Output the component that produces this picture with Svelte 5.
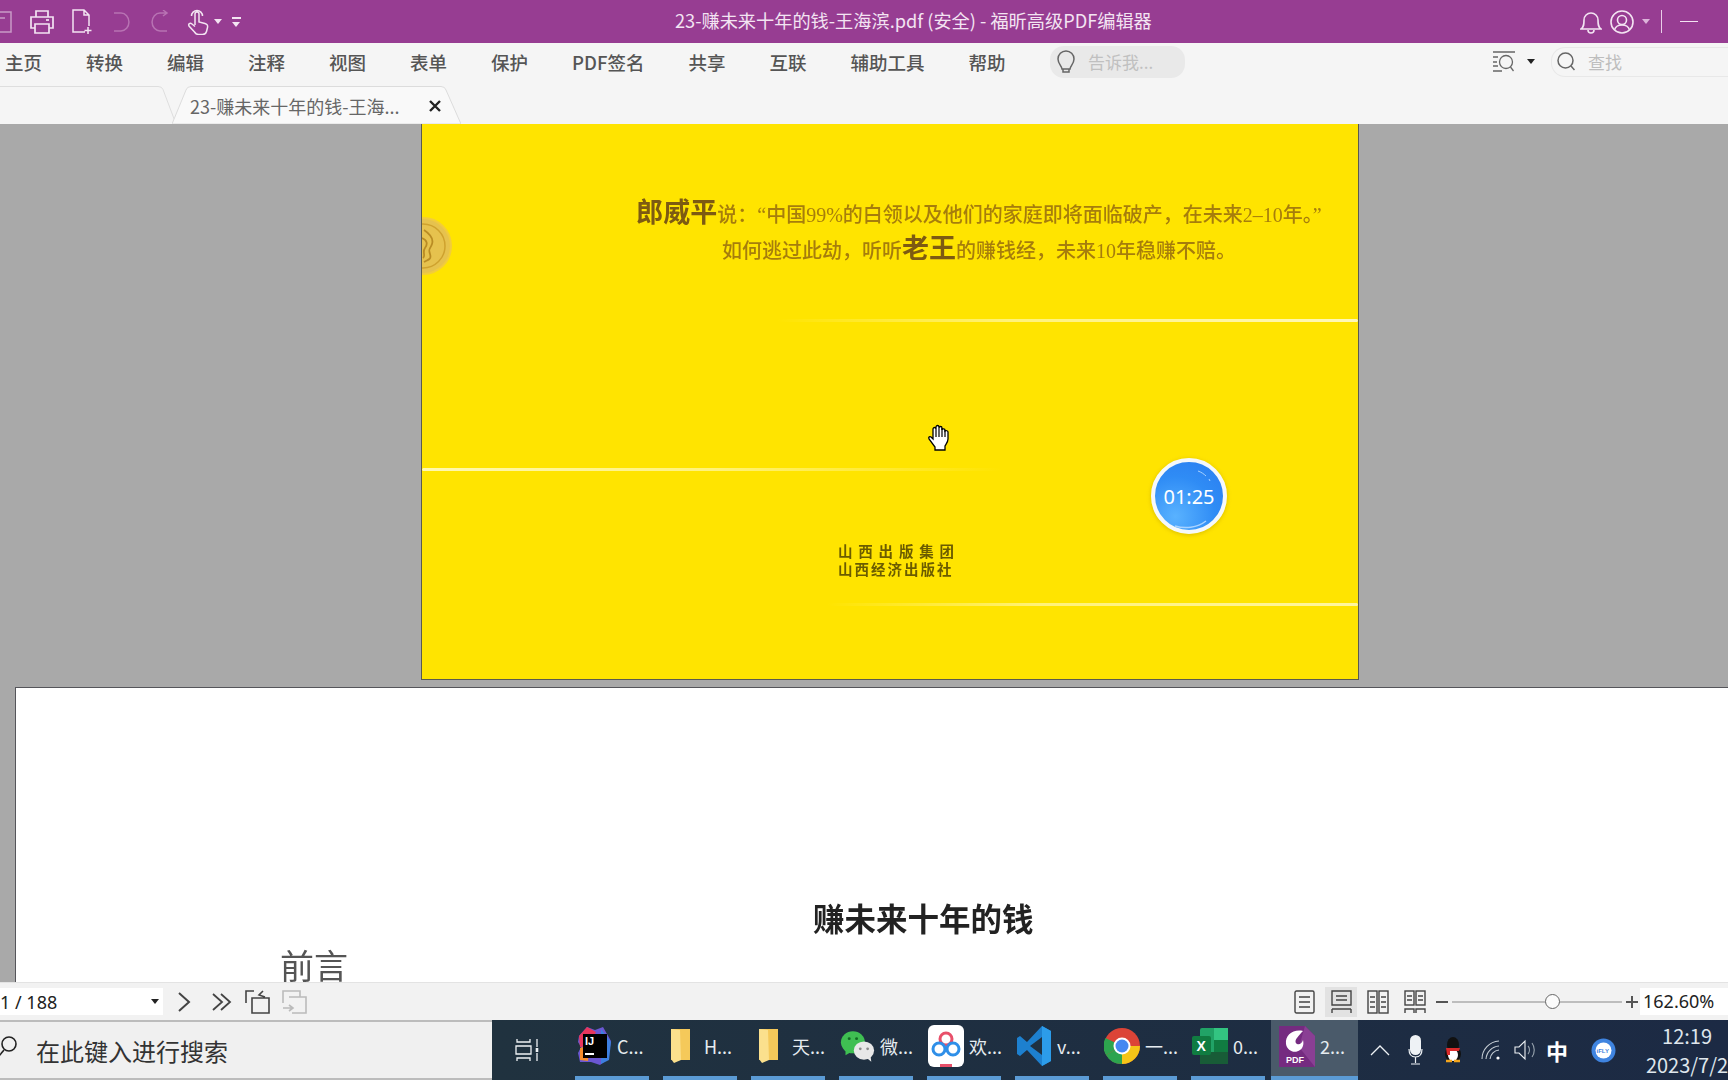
<script>
  const menus = ["主页", "转换", "编辑", "注释", "视图", "表单", "保护", "PDF签名", "共享", "互联", "辅助工具", "帮助"];
  const tasks = [
    { key: "idea", label: "C..." },
    { key: "folder", label: "H..." },
    { key: "folder", label: "天..." },
    { key: "wechat", label: "微..." },
    { key: "baidu", label: "欢..." },
    { key: "vscode", label: "v..." },
    { key: "chrome", label: "一..." },
    { key: "excel", label: "0..." },
    { key: "foxit", label: "2...", active: true }
  ];
</script>

<div class="app">
  <header class="titlebar">
    <div class="quick">
      <svg class="save" width="22" height="24" viewBox="0 0 22 24"><path d="M1 2h19v20H1zM6 8h8" fill="none" stroke="#c99ac6" stroke-width="1.5"/></svg>
      <svg width="26" height="26" viewBox="0 0 26 26" fill="none" stroke="#f3e4f2" stroke-width="1.7"><path d="M7 8V2h12v6M6 19H2V8h22v11h-4M6 15h14v9H6z"/><path d="M17 11h3"/></svg>
      <svg width="22" height="26" viewBox="0 0 22 26" fill="none" stroke="#f3e4f2" stroke-width="1.5"><path d="M14 23H2V1h11l5 5v11M13 1v5h5M17 18v7M13.500 21.500h7"/></svg>
      <svg width="18" height="24" viewBox="0 0 18 24" fill="none" stroke="#b873b3" stroke-width="1.5"><path d="M2 3h7a7.500 8.500 0 0 1 0 18H2"/></svg>
      <svg width="18" height="24" viewBox="0 0 18 24" fill="none" stroke="#b873b3" stroke-width="1.5"><path d="M16 21H9A7.500 8.500 0 0 1 9 3h7M12 0l4 3-4 3"/></svg>
      <svg width="22" height="26" viewBox="0 0 22 26" fill="none" stroke="#f3e4f2" stroke-width="1.5"><path d="M8 16V5a2 2 0 0 1 4 0v8l6 1.500c2 .5 3 2 2.500 4l-1 4c-.5 2-2 3-4 3h-4c-2 0-3-1-4-2.500L2 17c-1-2 1-3.500 3-2l3 2.500M4.500 7a5.500 5.500 0 0 1 11 0"/></svg>
      <span class="caret light"></span>
      <span class="more"></span>
    </div>
    <div class="doc-title">23-赚未来十年的钱-王海滨.pdf (安全) - 福昕高级PDF编辑器</div>
    <div class="win">
      <svg width="22" height="25" viewBox="0 0 22 25" fill="none" stroke="#f3e4f2" stroke-width="1.6"><path d="M1 20c3-2 3-5 3-9a7 7 0 0 1 14 0c0 4 0 7 3 9zM8 21a3 3 0 0 0 6 0"/></svg>
      <svg width="24" height="24" viewBox="0 0 24 24" fill="none" stroke="#f3e4f2" stroke-width="1.6"><circle cx="12" cy="12" r="11"/><circle cx="12" cy="10" r="4.500"/><path d="M4.500 20c1-4 4-5 7.500-5s6.500 1 7.500 5"/></svg>
      <span class="caret pink"></span>
      <span class="divider"></span>
      <span class="minimize"></span>
    </div>
  </header>

  <nav class="menubar">
    <div class="menus">
      {#each menus as menu}
        <span class="menu">{menu}</span>
      {/each}
    </div>
    <div class="tell">
      <svg width="20" height="24" viewBox="0 0 20 24" fill="none" stroke="#666" stroke-width="1.500"><path d="M6 19c0-3-4-5-4-10a8 8 0 0 1 16 0c0 5-4 7-4 10zM7 19v3h6v-3"/></svg>
      <span>告诉我...</span>
    </div>
    <svg class="lookup" width="24" height="22" viewBox="0 0 24 22" fill="none" stroke="#666" stroke-width="1.300"><path d="M1 1h22M1 6h5M1 11h4M1 15h5M1 20h9"/><circle cx="14" cy="11" r="6.500"/><path d="M18.500 16l3 4"/></svg>
    <span class="caret dark"></span>
    <div class="find">
      <svg width="18" height="19" viewBox="0 0 18 19" fill="none" stroke="#666" stroke-width="1.500"><circle cx="8.500" cy="8.500" r="7.500"/><path d="M14 14l3.500 4"/></svg>
      <span>查找</span>
    </div>
  </nav>

  <div class="tabbar">
    <svg class="tab-back" width="176" height="38" viewBox="0 0 176 38"><path d="M0 .5h158q4 0 5 3L176 38" fill="none" stroke="#dedede"/></svg>
    <div class="tab">
      <svg class="tab-shape" width="289" height="38" viewBox="0 0 289 38"><path d="M0 38L14 4q1-3.500 5-3.500h250q4 0 5 3.500l15 34z" fill="#f9f9f9" stroke="#dcdcdc"/></svg>
      <span class="tab-name">23-赚未来十年的钱-王海...</span>
      <svg class="tab-close" width="14" height="14" viewBox="0 0 14 14"><path d="M2 2l10 10M12 2L2 12" stroke="#222" stroke-width="2.400"/></svg>
    </div>
  </div>

  <main class="viewer">
    <section class="page-cover">
      <svg class="coin" width="30" height="60" viewBox="0 0 30 60"><circle cx="1" cy="30" r="28" fill="#e6c24e" stroke="#f2cc3c" stroke-width="2"/><circle cx="1" cy="30" r="22" fill="none" stroke="#cfa22e" stroke-width="1.500"/><path d="M2 14c6 4 10 8 8 14s-4 4-2 10-3 6-6 8M0 22c5 2 6 6 3 10s1 8-2 10" fill="none" stroke="#b98c24" stroke-width="1.800"/></svg>
      <div class="blurb">
        <p><b>郎威平</b>说：“中国99%的白领以及他们的家庭即将面临破产，在未来2–10年。”</p>
        <p>如何逃过此劫，听听<b>老王</b>的赚钱经，未来10年稳赚不赔。</p>
      </div>
      <div class="streak s1"></div>
      <div class="streak s2"></div>
      <div class="streak s3"></div>
      <div class="press">
        <div class="press-a">山西出版集团</div>
        <div>山西经济出版社</div>
      </div>
      <div class="timer">
        <svg class="shine" width="68" height="68" viewBox="0 0 68 68" fill="none" stroke="#a9d3ff" stroke-width="1"><path d="M43 9c3 1 6 3 8 5M54 17l1 2"/><path d="M20 64c10 3 22 2 31-5" stroke-width="1.500"/></svg>
        <span>01:25</span>
      </div>
      <svg class="hand" width="25" height="27" viewBox="0 0 25 27"><path d="M8 26v-3L2 15c-1-2 1-3 2-2l2 2V5c0-2 3-2 3 0V3c0-2 3-2 3 0v1c0-2 3-2 3 0v2c0-2 3-1 3 0v1c1-1 3 0 3 1v7c0 3-2 5-3 7v4z" fill="#fff" stroke="#000" stroke-width="1.300"/><path d="M9 5v8M12 4v9M15 4v9M18 6v7" stroke="#000" stroke-width="1.200"/></svg>
    </section>
    <section class="page-text">
      <h1>赚未来十年的钱</h1>
      <h2>前言</h2>
    </section>
  </main>

  <footer class="statusbar">
    <div class="page-no"><span>1 / 188</span><i class="caret dark"></i></div>
    <svg class="nav" width="14" height="22" viewBox="0 0 14 22" fill="none" stroke="#444" stroke-width="2"><path d="M2 2l10 9-10 9"/></svg>
    <svg class="nav2" width="20" height="20" viewBox="0 0 20 20" fill="none" stroke="#444" stroke-width="1.800"><path d="M1 2l9 8-9 8M9 2l9 8-9 8"/></svg>
    <svg class="nav3" width="25" height="24" viewBox="0 0 25 24" fill="none" stroke="#444" stroke-width="1.600"><path d="M9 1H1v12M7 8h17v15H7zM18 1l-4 4 6 2"/></svg>
    <svg class="nav4" width="25" height="24" viewBox="0 0 25 24" fill="none" stroke="#bbb" stroke-width="1.600"><path d="M1 13V1h17v6M7 7h17v16H10M1 18h10M7 15l4 3-4 3"/></svg>
    <div class="view-modes">
      <svg width="21" height="24" viewBox="0 0 21 24" fill="none" stroke="#444" stroke-width="1.400"><rect x="1" y="1" width="19" height="22" rx="1.500"/><path d="M5 7h11M5 12h11M5 17h11"/></svg>
      <div class="mode-on">
        <svg width="21" height="24" viewBox="0 0 21 24" fill="none" stroke="#444" stroke-width="1.400"><path d="M1 1h19v14H1zM5 6h11M5 10h11M1 19h19M1 23v-4M20 23v-4"/></svg>
      </div>
      <svg width="22" height="24" viewBox="0 0 22 24" fill="none" stroke="#444" stroke-width="1.400"><rect x="1" y="1" width="9" height="22"/><rect x="12" y="1" width="9" height="22"/><path d="M3 7h5M3 12h5M3 17h5M14 7h5M14 12h5M14 17h5"/></svg>
      <svg width="22" height="24" viewBox="0 0 22 24" fill="none" stroke="#444" stroke-width="1.400"><rect x="1" y="1" width="9" height="14"/><rect x="12" y="1" width="9" height="14"/><path d="M3 6h5M3 10h5M14 6h5M14 10h5M1 23v-4h9v4M12 23v-4h9v4"/></svg>
    </div>
    <div class="zoom">
      <span class="zoom-minus"></span>
      <div class="slider"><span class="thumb"></span></div>
      <span class="zoom-plus"></span>
      <div class="zoom-value">162.60%</div>
    </div>
  </footer>

  <div class="taskbar">
    <div class="search">
      <svg width="20" height="22" viewBox="0 0 20 22" fill="none" stroke="#222" stroke-width="1.600"><circle cx="9" cy="8" r="7"/><path d="M4 14l-5 6"/></svg>
      <span>在此键入进行搜索</span>
    </div>
    <div class="tray-area">
      <svg class="taskview" width="25" height="24" viewBox="0 0 25 24" fill="none" stroke="#eef2f5" stroke-width="1.300"><path d="M2 1v3h13V1M1 8h15v8H1zM2 23v-3h13v3M22 1v8M22 15v8"/><path d="M22 10v4" stroke-width="2.600"/></svg>
      <div class="tasks">
        {#each tasks as task}
          <div class="task" class:active={task.active}>
            {#if task.key === "idea"}
              <svg width="36" height="40" viewBox="0 0 36 40"><path d="M3 10l8-9 8 3 8-3 8 14-3 18-8 6-9-3-11 0-2-9 3-6-3-5z" fill="#6b57d2"/><path d="M3 10l8-9 9 5-7 14-9 1z" fill="#e8365d"/><path d="M4 22l9-3-1 16-8-1z" fill="#f48c2c"/><path d="M25 3l10 13-2 18-8 4z" fill="#3d7fe0"/><rect x="7" y="8" width="24" height="24" fill="#000"/><text x="9" y="19" class="ij">IJ</text><rect x="9" y="27" width="9" height="2" fill="#fff"/></svg>
            {:else if task.key === "folder"}
              <svg width="22" height="36" viewBox="0 0 22 36"><path d="M1 1h19v31H1z" fill="#f5c95a"/><path d="M1 1l9 1 1 30-7 3-3-4z" fill="#fbe08d"/></svg>
            {:else if task.key === "wechat"}
              <svg width="35" height="36" viewBox="0 0 38 36"><ellipse cx="14" cy="14" rx="13" ry="12" fill="#3fbf52"/><path d="M6 22l0 6 7-4z" fill="#3fbf52"/><circle cx="10" cy="10" r="1.600" fill="#136b24"/><circle cx="18" cy="10" r="1.600" fill="#136b24"/><ellipse cx="26" cy="23" rx="11" ry="10" fill="#e8e8e8"/><path d="M29 31l5 4-1-7z" fill="#e8e8e8"/><circle cx="22" cy="21" r="1.500" fill="#8a8a8a"/><circle cx="30" cy="21" r="1.500" fill="#8a8a8a"/></svg>
            {:else if task.key === "baidu"}
              <svg width="36" height="42" viewBox="0 0 36 42"><rect width="36" height="42" rx="6" fill="#fff"/><circle cx="18" cy="14" r="6" fill="none" stroke="#e8506a" stroke-width="3"/><circle cx="11" cy="24" r="6" fill="none" stroke="#2f8fe8" stroke-width="3"/><circle cx="25" cy="24" r="6" fill="none" stroke="#2f8fe8" stroke-width="3"/><rect x="12" y="39" width="12" height="3" fill="#e8506a"/></svg>
            {:else if task.key === "vscode"}
              <svg width="36" height="42" viewBox="0 0 36 42"><path d="M26 1l9 5v30l-9 5-15-16-7 6-3-2v-16l3-2 7 6z" fill="#1d80cf"/><path d="M26 12L14 21l12 9z" fill="#1f3142"/><path d="M26 1l9 5v30l-9 5z" fill="#2c9cea"/></svg>
            {:else if task.key === "chrome"}
              <svg width="36" height="42" viewBox="0 0 36 36"><circle cx="18" cy="18" r="18" fill="#dc4437"/><path d="M18 18L2 27a18 18 0 0 1-.5-17z" fill="#2da44e"/><path d="M18 18l-16 9a18 18 0 0 0 16 9z" fill="#2da44e"/><path d="M18 18h18a18 18 0 0 1-18 18z" fill="#f5c518"/><circle cx="18" cy="18" r="8.500" fill="#fff"/><circle cx="18" cy="18" r="6.500" fill="#4688f1"/></svg>
            {:else if task.key === "excel"}
              <svg width="36" height="38" viewBox="0 0 36 38"><rect x="8" y="1" width="28" height="36" rx="2" fill="#21a366"/><rect x="22" y="1" width="14" height="12" fill="#33c481"/><rect x="8" y="25" width="28" height="12" fill="#185c37"/><rect x="22" y="13" width="14" height="12" fill="#107c41"/><rect x="0" y="9" width="19" height="19" rx="2" fill="#107c41"/><text x="4.500" y="24" class="xl">X</text></svg>
            {:else if task.key === "foxit"}
              <svg width="36" height="42" viewBox="0 0 36 42"><path d="M0 1h26l10 10v31H0z" fill="#752b80"/><path d="M26 1l10 10v31L20 22z" fill="#8a3f94"/><path d="M24 6C14 4 6 10 7 19c1 7 9 10 14 6 3-2 4-6 3-10-1 3-3 5-6 4-2-1-2-4 0-6 2-3 4-5 6-7z" fill="#fff"/><text x="7" y="38" class="fx">PDF</text></svg>
            {/if}
            <span>{task.label}</span>
          </div>
        {/each}
      </div>
      <div class="tray">
        <svg width="20" height="12" viewBox="0 0 20 12" fill="none" stroke="#eef2f5" stroke-width="1.300"><path d="M1 11l9-9 9 9"/></svg>
        <svg width="15" height="30" viewBox="0 0 15 30"><rect x="2" y="0" width="11" height="20" rx="5.500" fill="#eef2f5"/><path d="M1 14c0 6 3 8 6.500 8s6.500-2 6.500-8M7.500 22v6M3 29h9" fill="none" stroke="#eef2f5" stroke-width="1.200"/></svg>
        <svg width="20" height="26" viewBox="0 0 20 26"><ellipse cx="10" cy="8" rx="6" ry="8" fill="#111"/><ellipse cx="10" cy="17" rx="8" ry="8" fill="#111"/><ellipse cx="10" cy="18" rx="5" ry="6" fill="#fff"/><path d="M3 11h14l-1 3-9 0v4l-3 0z" fill="#d92b2b"/><path d="M3 24h6M11 24h6" stroke="#f3a51c" stroke-width="2.500"/></svg>
        <svg width="20" height="22" viewBox="0 0 20 22" fill="none" stroke="#c7cfd6" stroke-width="1.100"><path d="M1 20A18 18 0 0 1 18 2M5 20A14 14 0 0 1 18 7M9 20a10 10 0 0 1 9-9"/><circle cx="17" cy="19" r="1.600" fill="#fff" stroke="none"/></svg>
        <svg width="22" height="22" viewBox="0 0 22 22" fill="none" stroke="#eef2f5" stroke-width="1.100"><path d="M1 8h4l6-6v18l-6-6H1z"/><path d="M14 7c2 2 2 6 0 8M18 4c3 4 3 10 0 14" stroke="#9aa6b0"/></svg>
        <span class="ime">中</span>
        <svg width="25" height="25" viewBox="0 0 25 25"><circle cx="12.500" cy="12.500" r="12" fill="#3f84e0"/><circle cx="12.500" cy="12.500" r="8" fill="#fff"/><text x="5.500" y="15" class="ifly">iFLY</text></svg>
      </div>
      <div class="clock">
        <div>12:19</div>
        <div>2023/7/2</div>
      </div>
    </div>
  </div>
</div>

<style>
  :global(body) {
    margin: 0;
    overflow: hidden;
  }

  .app {
    width: 1728px;
    height: 1080px;
    display: flex;
    flex-direction: column;
    overflow: hidden;
    font-family: "Noto Sans CJK SC", "Noto Sans", sans-serif;
    background: #f5f5f5;
  }

  svg {
    flex: none;
    display: block;
  }

  .caret {
    display: block;
    flex: none;
    width: 0;
    height: 0;
    border-left: 4.5px solid transparent;
    border-right: 4.5px solid transparent;
    border-top: 5px solid #222;
  }

  .caret.light {
    border-top-color: #f3e4f2;
  }

  .caret.pink {
    border-top-color: #dcb4da;
  }

  .titlebar {
    height: 43px;
    flex: none;
    display: flex;
    align-items: center;
    background: #973d92;
  }

  .quick {
    width: 250px;
    flex: none;
    display: flex;
    align-items: center;
  }

  .save {
    margin-left: -9px;
  }

  .quick svg:nth-child(2) {
    margin-left: 16px;
  }

  .quick svg:nth-child(3) {
    margin-left: 16px;
  }

  .quick svg:nth-child(4) {
    margin-left: 19px;
  }

  .quick svg:nth-child(5) {
    margin-left: 21px;
  }

  .quick svg:nth-child(6) {
    margin-left: 18px;
  }

  .quick .caret {
    margin-left: 5px;
  }

  .more {
    margin-left: 10px;
    width: 9px;
    height: 8px;
    border-top: 2px solid #f3e4f2;
    position: relative;
  }

  .more::after {
    content: "";
    position: absolute;
    top: 3px;
    left: 0;
    border-left: 4.5px solid transparent;
    border-right: 4.5px solid transparent;
    border-top: 5px solid #f3e4f2;
  }

  .doc-title {
    margin: 0 0 3px 425px;
    font-size: 18.200px;
    line-height: 22px;
    color: #f3e4f2;
    white-space: nowrap;
  }

  .win {
    margin-left: auto;
    display: flex;
    align-items: center;
    gap: 8px;
    padding-right: 30px;
  }

  .win .caret {
    margin-left: 0;
  }

  .divider {
    width: 1px;
    height: 23px;
    margin-left: 3px;
    background: #e9cfe8;
  }

  .minimize {
    width: 18px;
    height: 1px;
    margin-left: 10px;
    background: #f3e4f2;
  }

  .menubar {
    height: 43px;
    flex: none;
    box-sizing: border-box;
    padding-bottom: 6px;
    display: flex;
    align-items: center;
    background: #f5f5f5;
  }

  .menus {
    display: flex;
    gap: 44px;
    padding-left: 5px;
    width: 1050px;
    flex: none;
    box-sizing: border-box;
  }

  .menu {
    font-size: 18.500px;
    line-height: 26px;
    font-weight: 500;
    color: #555;
    white-space: nowrap;
  }

  .tell {
    width: 135px;
    height: 32px;
    flex: none;
    box-sizing: border-box;
    display: flex;
    align-items: center;
    gap: 12px;
    padding-left: 6px;
    border-radius: 14px;
    background: #e9e9e9;
    font-size: 17px;
    color: #c0c0c0;
    margin-right: 307px;
  }

  .lookup {
    margin-right: 11px;
  }

  .find {
    margin-left: 16px;
    flex: 1;
    height: 28px;
    display: flex;
    align-items: center;
    gap: 13px;
    padding-left: 5px;
    border: 1px solid #e8e8e8;
    border-right: 0;
    border-radius: 14px 0 0 14px;
    font-size: 17px;
    color: #bdbdbd;
  }

  .tabbar {
    height: 38px;
    flex: none;
    display: flex;
    background: #f5f5f5;
  }

  .tab-back {
    margin-right: -4px;
  }

  .tab {
    position: relative;
    width: 289px;
    flex: none;
    display: flex;
    align-items: center;
    padding: 2px 0 0 18px;
    box-sizing: border-box;
  }

  .tab-shape {
    position: absolute;
    left: 0;
    top: 0;
  }

  .tab-name {
    position: relative;
    width: 238px;
    font-size: 18px;
    color: #666;
    white-space: nowrap;
  }

  .tab-close {
    position: relative;
  }

  .viewer {
    height: 858px;
    flex: none;
    overflow: hidden;
    background: #a9a9a9;
  }

  .page-cover {
    position: relative;
    box-sizing: border-box;
    width: 938px;
    height: 556px;
    margin-left: 421px;
    overflow: hidden;
    padding: 73px 0 0 178px;
    background: #ffe400;
    border: 1px solid #5a5a50;
    border-top: 0;
  }

  .coin {
    position: absolute;
    left: 0;
    top: 92px;
    filter: blur(0.5px);
  }

  .blurb {
    font-family: "Liberation Serif", "Noto Sans CJK SC", serif;
    text-align: center;
    white-space: nowrap;
    color: #a67d0c;
    filter: blur(0.5px);
  }

  .blurb p {
    margin: 0;
    font-size: 20px;
    line-height: 36px;
    font-weight: 500;
  }

  .blurb b {
    font-family: "Noto Sans CJK SC", sans-serif;
    font-size: 27px;
    line-height: 1;
    font-weight: 700;
    color: #7d5a12;
  }

  .streak {
    position: absolute;
    height: 3px;
    border-radius: 2px;
    filter: blur(0.5px);
  }

  .s1 {
    right: 0;
    top: 195px;
    width: 580px;
    background: linear-gradient(90deg, #ffe400, #fff27a 40%, #fff8b8);
  }

  .s2 {
    left: 0;
    top: 344px;
    width: 580px;
    background: linear-gradient(90deg, #fff8b0, #fff27a 50%, #ffe400);
  }

  .s3 {
    right: 0;
    top: 479px;
    width: 530px;
    background: linear-gradient(90deg, #ffe400, #fff27a 40%, #fff6a0);
  }

  .press {
    position: absolute;
    left: 416px;
    top: 418px;
    width: 118px;
    font-size: 14.500px;
    line-height: 18px;
    font-weight: 700;
    color: #6b5c00;
    white-space: nowrap;
    letter-spacing: 2px;
    filter: blur(0.3px);
  }

  .press-a {
    letter-spacing: 5.800px;
  }

  .timer {
    position: absolute;
    left: 729px;
    top: 334px;
    width: 76px;
    height: 76px;
    box-sizing: border-box;
    display: flex;
    align-items: center;
    justify-content: center;
    border: 4px solid #f5f8fa;
    border-radius: 50%;
    background: radial-gradient(circle at 30% 80%, #59b2ff, #2f8cf5 55%, #2a7cf0);
    box-shadow: 0 1px 4px rgba(160, 130, 0, 0.4);
    font-family: "Noto Sans", sans-serif;
    font-size: 20px;
    color: #fff;
  }

  .timer span {
    position: relative;
  }

  .shine {
    position: absolute;
    left: 0;
    top: 0;
  }

  .hand {
    position: absolute;
    left: 505px;
    top: 300px;
  }

  .page-text {
    box-sizing: border-box;
    height: 400px;
    margin: 7px 0 0 15px;
    padding-top: 206px;
    background: #fff;
    border-top: 1px solid #55555a;
    border-left: 1px solid #55555a;
  }

  h1 {
    margin: 0;
    padding-left: 797px;
    font-size: 31.500px;
    line-height: 46px;
    font-weight: 700;
    color: #222;
    white-space: nowrap;
    filter: blur(0.6px);
  }

  h2 {
    margin: 3px 0 0;
    padding-left: 264px;
    font-size: 34px;
    line-height: 44px;
    font-weight: 400;
    color: #555;
    filter: blur(0.5px);
  }

  .statusbar {
    position: relative;
    height: 38px;
    flex: none;
    display: flex;
    align-items: center;
    box-sizing: border-box;
    border-top: 1px solid #e3e3e3;
    background: #f2f2f2;
  }

  .page-no {
    width: 163px;
    height: 27px;
    flex: none;
    box-sizing: border-box;
    display: flex;
    align-items: center;
    justify-content: space-between;
    padding-right: 4px;
    background: #fff;
    font-family: "Noto Sans", sans-serif;
    font-size: 18px;
    color: #222;
  }

  .nav {
    margin-left: 14px;
  }

  .nav2 {
    margin-left: 21px;
  }

  .nav3 {
    margin-left: 13px;
  }

  .nav4 {
    margin-left: 12px;
  }

  .view-modes {
    display: flex;
    align-items: center;
    margin-left: 987px;
  }

  .view-modes > svg:nth-child(3) {
    margin-left: 10px;
  }

  .view-modes > svg:nth-child(4) {
    margin-left: 15px;
  }

  .mode-on {
    width: 32px;
    height: 30px;
    margin-left: 10px;
    display: flex;
    align-items: center;
    justify-content: center;
    background: #e2e2e2;
  }

  .zoom {
    flex: 1;
    display: flex;
    align-items: center;
    margin-left: 10px;
  }

  .zoom-minus {
    width: 12px;
    height: 2px;
    background: #555;
  }

  .slider {
    position: relative;
    width: 170px;
    height: 2px;
    margin-left: 4px;
    background: #bdbdbd;
  }

  .thumb {
    position: absolute;
    left: 93px;
    top: -7px;
    width: 13px;
    height: 13px;
    border: 1px solid #666;
    border-radius: 50%;
    background: #fbfbfb;
  }

  .zoom-plus {
    position: relative;
    width: 12px;
    height: 2px;
    margin-left: 4px;
    background: #555;
  }

  .zoom-plus::after {
    content: "";
    position: absolute;
    left: 5px;
    top: -5px;
    width: 2px;
    height: 12px;
    background: #555;
  }

  .zoom-value {
    width: 88px;
    height: 27px;
    margin-left: 2px;
    padding-left: 3px;
    background: #fff;
    font-family: "Noto Sans", sans-serif;
    font-size: 18px;
    line-height: 27px;
    color: #222;
  }

  .taskbar {
    height: 60px;
    flex: none;
    display: flex;
  }

  .search {
    width: 492px;
    flex: none;
    box-sizing: border-box;
    display: flex;
    align-items: center;
    gap: 16px;
    border-top: 2px solid #bcbcbc;
    border-bottom: 2px solid #bcbcbc;
    background: #f0f0f0;
    font-size: 24px;
    color: #333;
  }

  .search svg {
    margin-bottom: 6px;
  }

  .tray-area {
    flex: 1;
    display: flex;
    align-items: center;
    overflow: hidden;
    background: linear-gradient(90deg, #20323f, #1c2a44);
  }

  .taskview {
    margin-left: 23px;
  }

  .tasks {
    display: flex;
    gap: 14px;
    margin-left: 35px;
    height: 60px;
    flex: none;
  }

  .task {
    position: relative;
    width: 74px;
    height: 60px;
    box-sizing: border-box;
    display: flex;
    align-items: center;
    gap: 5px;
    padding: 0 0 4px 1px;
    border-bottom: 4px solid #5b9bd5;
    font-size: 18px;
    color: #e6ecf0;
    white-space: nowrap;
  }

  .task:nth-child(2) svg,
  .task:nth-child(3) svg {
    margin: 0 7px 0 6px;
  }

  .task.active {
    width: 87px;
    margin-left: -8px;
    padding-left: 8px;
    background: #4a5a6a;
  }

  .ij {
    font-family: "Liberation Sans", sans-serif;
    font-size: 11px;
    font-weight: 700;
    fill: #fff;
  }

  .xl {
    font-family: "Liberation Sans", sans-serif;
    font-size: 14px;
    font-weight: 700;
    fill: #fff;
  }

  .fx {
    font-family: "Liberation Sans", sans-serif;
    font-size: 9px;
    font-weight: 700;
    fill: #fff;
  }

  .ifly {
    font-family: "Liberation Sans", sans-serif;
    font-size: 6px;
    font-weight: 700;
    fill: #3f84e0;
  }

  .tray {
    display: flex;
    align-items: center;
    flex: none;
    margin-left: 12px;
  }

  .tray > :nth-child(2) {
    margin-left: 18px;
  }

  .tray > :nth-child(3) {
    margin-left: 20px;
  }

  .tray > :nth-child(4) {
    margin-left: 18px;
  }

  .tray > :nth-child(5) {
    margin-left: 13px;
  }

  .tray > :nth-child(6) {
    margin-left: 10px;
  }

  .tray > :nth-child(7) {
    margin-left: 23px;
  }

  .ime {
    font-size: 22px;
    line-height: 30px;
    font-weight: 700;
    color: #fff;
  }

  .clock {
    flex: none;
    width: 90px;
    margin-left: 26px;
    text-align: center;
    font-size: 20px;
    line-height: 29px;
    color: #dfe6ec;
    white-space: nowrap;
  }
</style>
